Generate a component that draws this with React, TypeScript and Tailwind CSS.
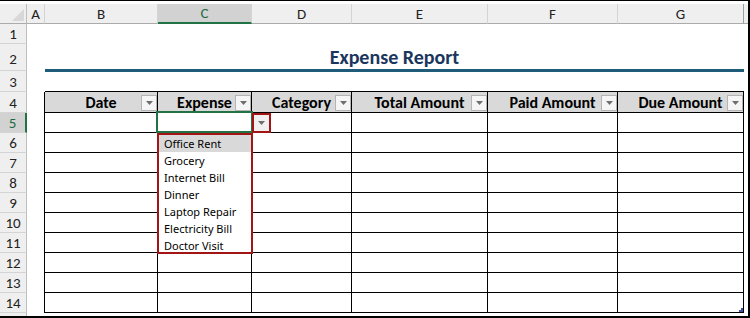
import clsx from 'clsx'

const sheetCols = [
  { l: 'A', w: 'w-[18px]' },
  { l: 'B', w: 'w-[113px]' },
  { l: 'C', w: 'w-[94px]' },
  { l: 'D', w: 'w-[100px]' },
  { l: 'E', w: 'w-[136px]' },
  { l: 'F', w: 'w-[130px]' },
  { l: 'G', w: 'w-[126px]' },
]

const tableCols = [
  { l: 'B', w: 'w-[113px]', h: 'Date' },
  { l: 'C', w: 'w-[94px]', h: 'Expense' },
  { l: 'D', w: 'w-[100px]', h: 'Category' },
  { l: 'E', w: 'w-[136px]', h: 'Total Amount' },
  { l: 'F', w: 'w-[130px]', h: 'Paid Amount' },
  { l: 'G', w: 'w-[126px]', h: 'Due Amount' },
]

const expenses = ['Office Rent', 'Grocery', 'Internet Bill', 'Dinner', 'Laptop Repair', 'Electricity Bill', 'Doctor Visit']

function Tri() {
  return (
    <svg width="7" height="4" viewBox="0 0 7 4">
      <path d="M0 0H7L3.5 4Z" fill="#6e6e6e" />
    </svg>
  )
}

function FilterBtn() {
  return (
    <span className="absolute bottom-[1px] right-0 flex h-[16px] w-[16px] items-center justify-center border border-[#b4b4b4] bg-[#f5f5f5]">
      <Tri />
    </span>
  )
}

function RowHead({ n, active, extra }: { n: number; active?: boolean; extra?: string }) {
  return (
    <div
      className={clsx(
        'flex w-[27px] shrink-0 items-end justify-center border-b border-b-[#d4d4d4] text-[15px] leading-[18px]',
        active
          ? 'border-r-2 border-r-[#217346] bg-[#d2d2d2] text-[#1e6b41]'
          : 'border-r border-r-[#bdbdbd] bg-[#efefef] text-[#222]',
        extra
      )}
    >
      {n}
    </div>
  )
}

// green cell cursor + validation arrow + open list on C5
function Selection() {
  return (
    <>
      <div className="pointer-events-none absolute -left-[2px] -top-[2px] z-10 h-[22px] w-[97px] border-2 border-[#217346]" />
      <div className="absolute left-[94px] top-0 z-20 flex h-[20px] w-[19px] items-center justify-center border-2 border-[#a31515] bg-[#f0f0f0]">
        <Tri />
      </div>
      <div className="absolute -left-[1px] top-[20px] z-20 h-[121px] w-[96px] overflow-hidden border-2 border-[#a31515] bg-white font-['Noto_Sans',sans-serif] text-[11px] text-black">
        {expenses.map((t, i) => (
          <div key={t} className={clsx('h-[17px] pl-[5px] leading-[17px]', i === 0 && 'bg-[#d9d9d9]')}>
            {t}
          </div>
        ))}
      </div>
    </>
  )
}

function BodyRow({ n }: { n: number }) {
  return (
    <div className="flex h-[20px]">
      <RowHead n={n} active={n === 5} />
      <div className="w-[18px] shrink-0 border-r border-black" />
      {tableCols.map((c) => (
        <div key={c.l} className={clsx('relative shrink-0 border-b border-r border-black', c.w)}>
          {n === 5 && c.l === 'C' && <Selection />}
          {n === 14 && c.l === 'G' && (
            <svg className="absolute bottom-0 right-0" width="4" height="4" viewBox="0 0 4 4">
              <path d="M2 0H4V4H0V2H2Z" fill="#3f4fa3" />
            </svg>
          )}
        </div>
      ))}
      <div className="flex-1" />
    </div>
  )
}

export default function App() {
  return (
    <div className="h-[318px] w-[750px] overflow-hidden border-b-2 border-r-2 border-t border-black bg-white font-['Carlito','Lato',sans-serif] text-black">
      <div className="h-[3px]" />

      {/* column letters */}
      <div className="flex h-[20px]">
        <div className="relative w-[27px] shrink-0 border-b border-r border-b-[#ababab] border-r-[#bdbdbd] bg-[#efefef]">
          <svg className="absolute bottom-[2px] right-[2px]" width="12" height="12" viewBox="0 0 12 12">
            <path d="M12 0V12H0Z" fill="#d8d8d8" />
          </svg>
        </div>
        {sheetCols.map((c) => (
          <div
            key={c.l}
            className={clsx(
              'flex shrink-0 items-center justify-center border-r text-[15px] leading-[18px]',
              c.w,
              c.l === 'G' ? 'border-r-[#9e9e9e]' : 'border-r-[#d4d4d4]',
              c.l === 'C'
                ? 'border-b-2 border-b-[#217346] bg-[#d2d2d2] text-[#1e6b41]'
                : 'border-b border-b-[#ababab] bg-[#efefef] text-[#222]'
            )}
          >
            {c.l}
          </div>
        ))}
        <div className="flex-1 border-b border-[#ababab] bg-[#efefef]" />
      </div>

      {/* row 1 */}
      <div className="flex h-[20px]">
        <RowHead n={1} />
        <div className="flex-1" />
      </div>

      {/* row 2: title */}
      <div className="flex h-[27px]">
        <RowHead n={2} extra="pb-[2px]" />
        <div className="w-[18px] shrink-0" />
        <div className="flex w-[699px] shrink-0 items-end justify-center border-b-2 border-[#1f5c7a] pb-[1px] text-[20px] font-bold leading-[22px] text-[#1b365d]">
          Expense Report
        </div>
        <div className="flex-1" />
      </div>

      {/* row 3 */}
      <div className="flex h-[21px]">
        <RowHead n={3} />
        <div className="w-[18px] shrink-0" />
        <div className="w-[699px] shrink-0 border-b border-t border-b-black border-t-[#1f5c7a]" />
        <div className="flex-1" />
      </div>

      {/* row 4: table header */}
      <div className="flex h-[21px]">
        <RowHead n={4} />
        <div className="w-[18px] shrink-0 border-r border-black" />
        {tableCols.map((c) => (
          <div
            key={c.l}
            className={clsx(
              'relative flex shrink-0 items-end justify-center border-b border-r border-black bg-[#d9d9d9] text-[16px] font-bold leading-[18px]',
              c.w
            )}
          >
            {c.h}
            <FilterBtn />
          </div>
        ))}
        <div className="flex-1" />
      </div>

      {[5, 6, 7, 8, 9, 10, 11, 12, 13, 14].map((n) => (
        <BodyRow key={n} n={n} />
      ))}

      {/* row 15, cut off */}
      <div className="flex h-[3px]">
        <div className="w-[27px] shrink-0 border-r border-[#bdbdbd] bg-[#efefef]" />
        <div className="flex-1" />
      </div>
    </div>
  )
}
